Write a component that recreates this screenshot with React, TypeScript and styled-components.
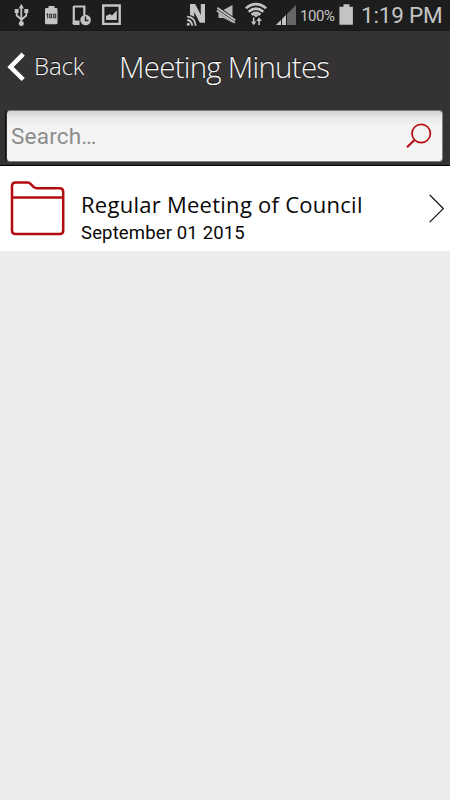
import React from 'react';
import styled, { createGlobalStyle } from 'styled-components';

const GlobalStyle = createGlobalStyle`
  * { box-sizing: border-box; }
  html, body { margin: 0; background: #ececec; }
  input, button { font: inherit; }
`;

const Screen = styled.main`
  display: flex;
  flex-direction: column;
  width: 450px;
  height: 800px;
  overflow: hidden;
  background: #ececec;
`;

const StatusBar = styled.div`
  display: flex;
  justify-content: space-between;
  height: 31px;
  flex: none;
  background: #1d1d1d;
  color: #c4c4c4;
  border-bottom: 1px solid #181818;
  font-family: Roboto, "Liberation Sans", sans-serif;
`;

const StatusGroup = styled.div<{ $start?: number; $end?: number }>`
  display: flex;
  align-items: flex-start;
  padding-left: ${p => p.$start ?? 0}px;
  padding-right: ${p => p.$end ?? 0}px;
`;

const StatusIcon = styled.svg<{ $gap: number }>`
  display: block;
  flex: none;
  height: 30px;
  margin-right: ${p => p.$gap}px;
`;

const StatusText = styled.span<{ $size: number; $width: number; $gap?: number; $spacing: number; $top: number }>`
  width: ${p => p.$width}px;
  margin-right: ${p => p.$gap ?? 0}px;
  padding-top: ${p => p.$top}px;
  font-size: ${p => p.$size}px;
  line-height: 26px;
  letter-spacing: ${p => p.$spacing}px;
  white-space: nowrap;
`;

const Header = styled.header`
  flex: none;
  height: 135px;
  background: #343233;
  border-bottom: 1px solid #000;
  padding: 0 6px;
`;

const Toolbar = styled.div`
  display: flex;
  align-items: center;
  height: 79px;
  padding-bottom: 7px;
  color: #f6f6f6;
  font-family: "Open Sans", "Noto Sans", sans-serif;
  font-weight: 300;
  white-space: nowrap;
  text-shadow: 0 -1px 1px #111;
`;

const BackButton = styled.button`
  display: flex;
  align-items: center;
  width: 113px;
  padding: 0;
  border: 0;
  background: none;
  color: inherit;
  font-size: 24px;
  line-height: 36px;
  letter-spacing: -0.1px;
  text-shadow: inherit;
`;

const BackLabel = styled.span`
  padding-bottom: 2px;
`;

const BackArrow = styled.svg`
  width: 20px;
  height: 32px;
  margin-right: 8px;
`;

const Title = styled.h1`
  margin: 0;
  font-size: 29.5px;
  line-height: 42px;
  font-weight: 300;
  letter-spacing: -0.75px;
`;

const SearchBox = styled.label`
  display: flex;
  align-items: center;
  justify-content: space-between;
  height: 52px;
  width: 437px;
  padding: 0 10px 0 4px;
  border: 1px solid #808080;
  border-left-color: #333;
  border-radius: 4px;
  background: linear-gradient(#d2d2d2, #e9e9e9 7px, #f3f3f3 15px, #f5f5f5);
  box-shadow: -1px 0 0 #111;
`;

const SearchInput = styled.input`
  width: 300px;
  padding: 0 0 1px;
  border: 0;
  outline: 0;
  background: none;
  color: #8c8c8c;
  font-family: Roboto, "Liberation Sans", sans-serif;
  font-size: 22.5px;
  letter-spacing: 0.2px;
  &::placeholder { color: #8c8c8c; opacity: 1; }
`;

const Row = styled.article`
  display: flex;
  flex: none;
  height: 85px;
  padding: 0 5px 0 10px;
  background: #fff;
  color: #080808;
`;

const FolderIcon = styled.svg`
  width: 56px;
  height: 58px;
  margin: 14px 15px 0 0;
`;

const Details = styled.div`
  flex: 1;
  padding-top: 22px;
  white-space: nowrap;
`;

const RowTitle = styled.h2`
  margin: 0;
  font: 400 22px/32px "Open Sans", "Noto Sans", sans-serif;
  letter-spacing: 0.26px;
`;

const RowDate = styled.p`
  margin: 2px 0 0;
  font: 400 18.5px/22px Roboto, "Liberation Sans", sans-serif;
  letter-spacing: 0.15px;
`;

const Chevron = styled.svg`
  width: 17px;
  height: 32px;
  margin-top: 27px;
`;

const App = () => (
  <>
    <GlobalStyle />
    <Screen>
      <StatusBar>
        <StatusGroup $start={14}>
          <StatusIcon $gap={14} width="15" viewBox="14 0 15 30" fill="#c4c4c4" stroke="#c4c4c4">
            <path d="M21.3 23V6M16.7 11v4.5l4.6 4M26.3 11v4.5l-4.6 4" fill="none" strokeWidth="1.8" />
            <path d="M21.3 3.8l2.6 4.7h-5.2zM14.7 9h4v4h-4zM24.3 9h4v4h-4z" stroke="none" />
            <circle cx="21.3" cy="23.5" r="2.5" stroke="none" />
          </StatusIcon>
          <StatusIcon $gap={13} width="16" viewBox="43 0 16 30" fill="#c4c4c4">
            <path d="M48.5 6h6v2H56.2q1.3 0 1.3 1.3V23q0 1.3-1.3 1.3h-9.9q-1.3 0-1.3-1.3V9.3q0-1.3 1.3-1.3h2.2z" />
            <path d="M46.5 14.5l1.2-.8v4.6M49.7 14.2h2v3.6h-2zM53.7 14.2h2v3.6h-2z" fill="none" stroke="#222" strokeWidth="1" />
          </StatusIcon>
          <StatusIcon $gap={9} width="20" viewBox="72 0 20 30">
            <path d="M74 6.5h10.3V15M73.8 6v16.7h5.4" fill="none" stroke="#c4c4c4" strokeWidth="2.2" />
            <path d="M73 20.5h6.5v4.4H74q-1.4 0-1.4-1.4z" fill="#c4c4c4" />
            <circle cx="85.6" cy="20" r="5.3" fill="#c4c4c4" />
            <path d="M85.5 16.5v3.9h3" fill="none" stroke="#222" strokeWidth="1.5" />
          </StatusIcon>
          <StatusIcon $gap={0} width="21" viewBox="101 0 21 30">
            <path d="M103.2 5.5h16.5v18.4h-16.5z" fill="none" stroke="#c4c4c4" strokeWidth="2.4" />
            <path d="M106 20v-4l4-2 2 1.5 4.8-5V20z" fill="#c4c4c4" />
          </StatusIcon>
        </StatusGroup>
        <StatusGroup $end={8}>
          <StatusIcon $gap={10} width="20" viewBox="186 0 20 30" fill="none" stroke="#c4c4c4">
            <path d="M190 15V4h5.2l5.6 11V4h4.2v18.8h-5.2L194.2 12v5q-2-1.7-4.2-2z" fill="#c4c4c4" stroke="none" />
            <path d="M187.2 16.7q7.8.5 8.5 9M187.2 20q4.5.5 5.1 5.7" strokeWidth="1.8" />
            <circle cx="188.3" cy="24.3" r="1.5" fill="#c4c4c4" stroke="none" />
          </StatusIcon>
          <StatusIcon $gap={8} width="20" viewBox="216 0 20 30">
            <path d="M218.5 10h4.8l9.2-5v17.8l-9.2-4.8h-4.8z" fill="#b8b8b8" />
            <path d="M216.8 8.5l18.2 12.7" stroke="#1d1d1d" strokeWidth="5.2" />
            <path d="M217.3 7.7l18 12.6M216.8 10.5l18 12.2" stroke="#c4c4c4" strokeWidth="1.7" />
          </StatusIcon>
          <StatusIcon $gap={8} width="24" viewBox="244 0 24 30" fill="none" stroke="#c4c4c4">
            <path d="M245.8 8.3q10.2-8.3 20.4 0M248.7 11.7q7.3-6.2 14.6 0M251.6 14.8q4.4-3.9 8.8 0" strokeWidth="2.5" />
            <path d="M253.2 15.3q2.8-2.2 5.6 0l-2.8 2z" fill="#c4c4c4" stroke="none" />
            <path d="M253.7 17.5v6M259.1 25v-6" strokeWidth="1.6" />
            <path d="M251 21.5h5.4l-2.7 3.8zM256.4 21h5.4l-2.7-3.8z" fill="#c4c4c4" stroke="none" />
          </StatusIcon>
          <StatusIcon $gap={3} width="21" viewBox="276 0 21 30">
            <path d="M276 25l20-20v20z" fill="#666" />
            <path d="M276 25l10-10v10z" fill="#c4c4c4" />
            <path d="M281.5 19v6M286.5 14v11" stroke="#1d1d1d" strokeWidth="1" />
          </StatusIcon>
          <StatusText $size={15} $width={36} $gap={3} $spacing={-0.4} $top={3}>100%</StatusText>
          <StatusIcon $gap={7} width="15" viewBox="339 0 15 30">
            <path d="M343.5 4.3h6v2.4h3.4v18h-13.5v-18h4.1z" fill="#c4c4c4" />
          </StatusIcon>
          <StatusText $size={22.5} $width={81} $spacing={-0.2} $top={2}>1:19 PM</StatusText>
        </StatusGroup>
      </StatusBar>
      <Header>
        <Toolbar>
          <BackButton type="button">
            <BackArrow viewBox="6 51 20 32" aria-hidden="true">
              <path d="M23.2 54.1L10.5 67l12.7 12.5" fill="none" stroke="#fff" strokeWidth="4.5" />
            </BackArrow>
            <BackLabel>Back</BackLabel>
          </BackButton>
          <Title>Meeting Minutes</Title>
        </Toolbar>
        <SearchBox>
          <SearchInput placeholder="Search…" aria-label="Search" />
          <svg width="26" height="26" viewBox="0 0 26 26" fill="none" stroke="#b40b10" strokeWidth="1.7" aria-hidden="true">
            <circle cx="15.2" cy="10.5" r="9.2" />
            <path d="M8.5 17L1 24.3" strokeWidth="2.1" />
          </svg>
        </SearchBox>
      </Header>
      <Row>
        <FolderIcon viewBox="10 180 56 58" fill="none" stroke="#b40b10" strokeWidth="2.5" aria-hidden="true">
          <path d="M12 197.5V186q0-3.5 3.5-3.5h12q2 0 3.4 1.7l2.6 2.7q1.5 1.4 3.5 1.4h22.7q3.5 0 3.5 3.5v39q0 3.2-3.5 3.2H15.5q-3.5 0-3.5-3.5v-33h51" />
        </FolderIcon>
        <Details>
          <RowTitle>Regular Meeting of Council</RowTitle>
          <RowDate>September 01 2015</RowDate>
        </Details>
        <Chevron viewBox="428 193 17 32" aria-hidden="true">
          <path d="M429.7 194.8L443.3 208.6L429.7 222.2" fill="none" stroke="#080808" strokeWidth="1.2" />
        </Chevron>
      </Row>
    </Screen>
  </>
);

export default App;
